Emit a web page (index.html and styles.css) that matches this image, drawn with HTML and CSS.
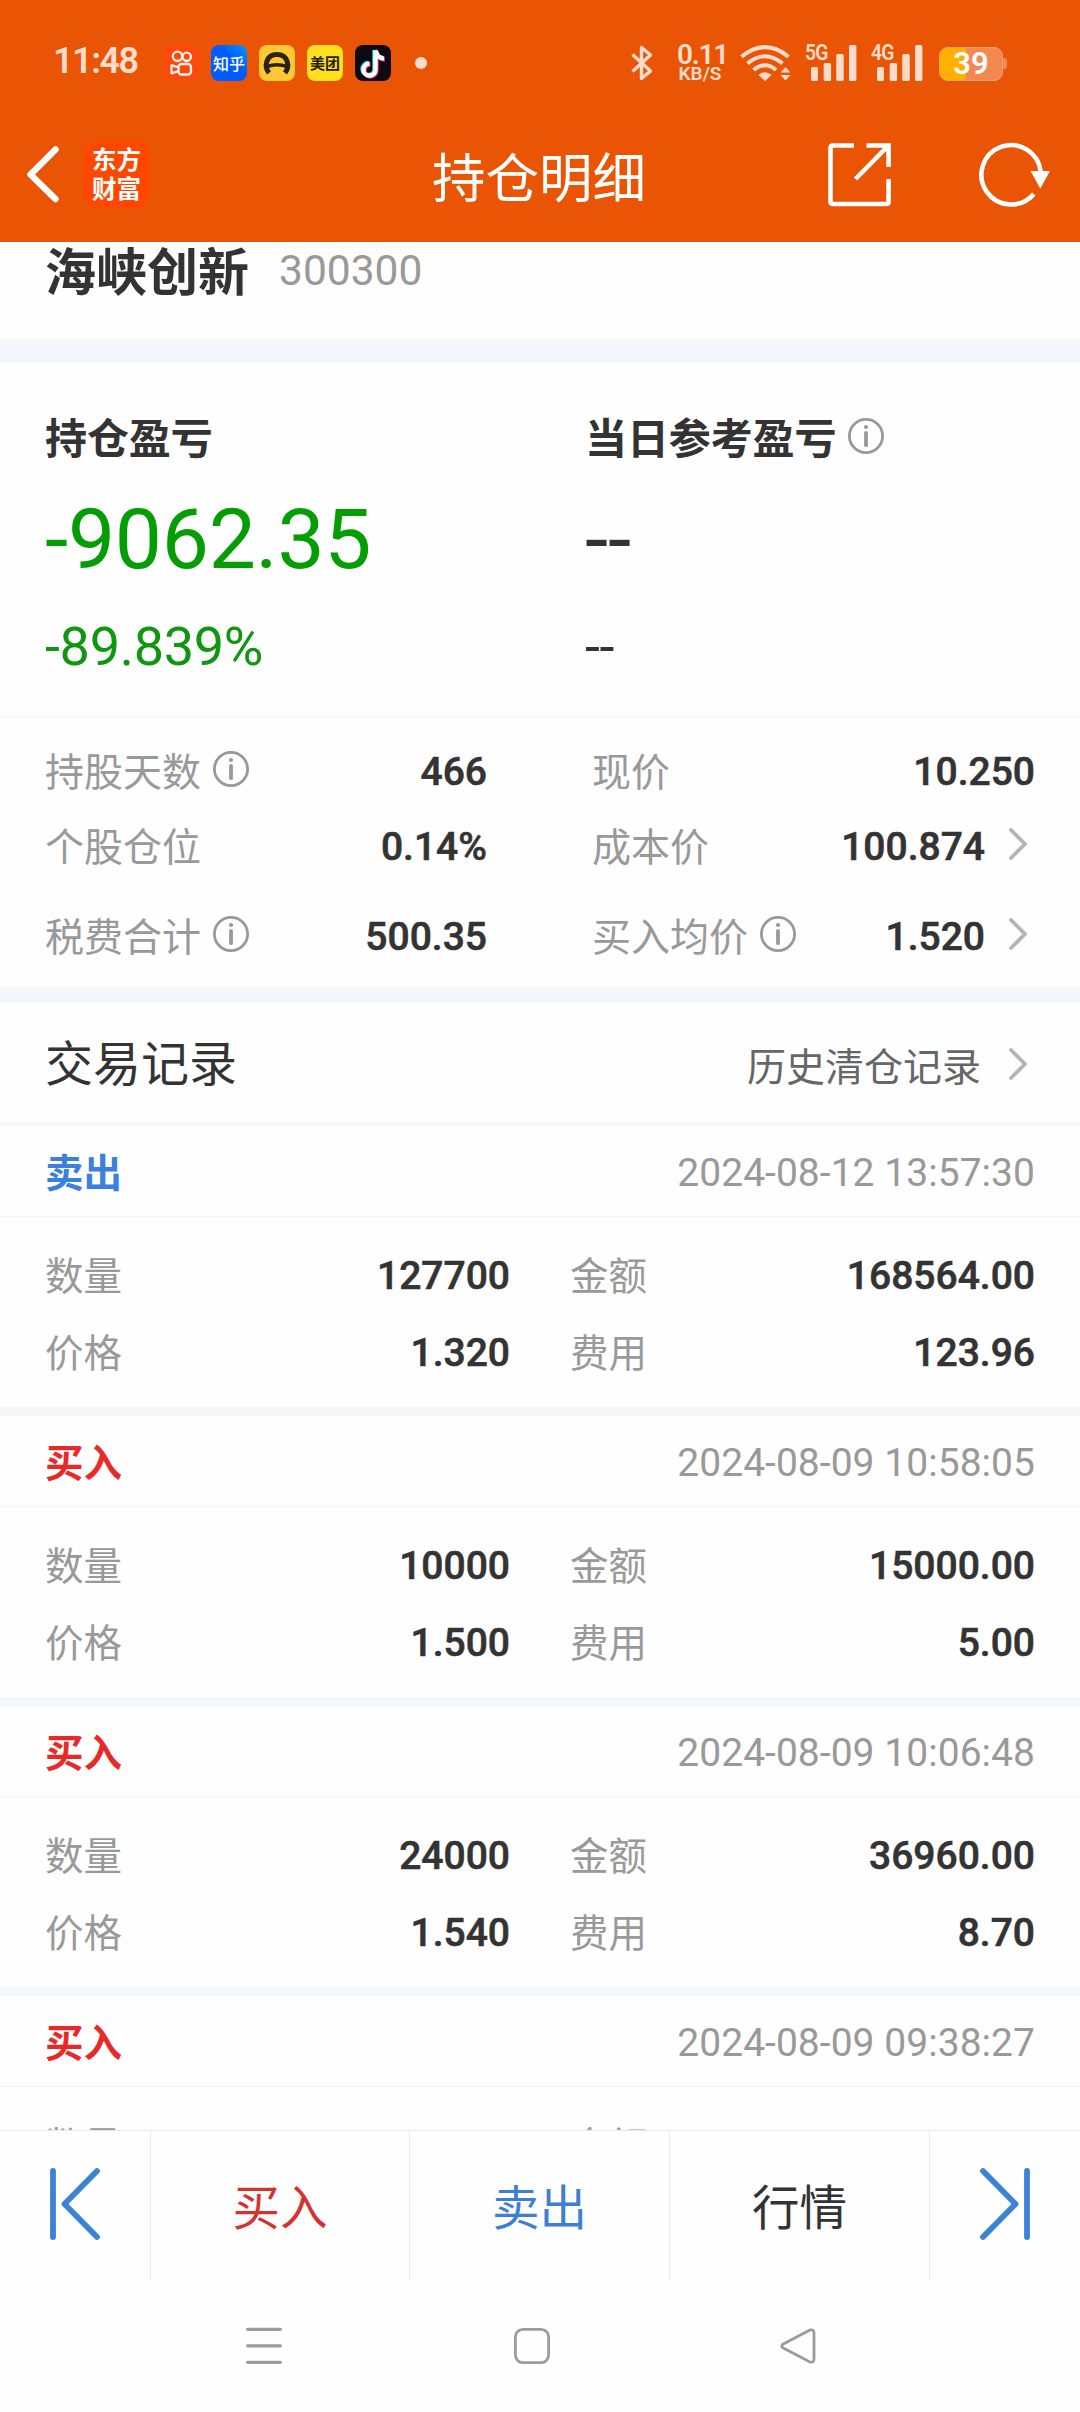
FILE: index.html
```html
<!DOCTYPE html>
<html lang="zh-CN">
<head>
<meta charset="utf-8">
<title>持仓明细</title>
<link rel="stylesheet" href="styles.css">
</head>
<body>
<svg class="defs" aria-hidden="true">
  <symbol id="info" viewBox="0 0 36 36"><circle cx="18" cy="18" r="16.6" fill="none" stroke="#999" stroke-width="2.8"/><circle cx="18" cy="9" r="2.1" fill="#999"/><path d="M18 15V27.2" stroke="#999" stroke-width="3.8" stroke-linecap="round"/></symbol>
  <symbol id="more" viewBox="0 0 18 32"><path d="M2 2L16 16L2 30" fill="none" stroke="#b4b4b4" stroke-width="3.8" stroke-linecap="round" stroke-linejoin="round"/></symbol>
  <symbol id="bars" viewBox="0 0 46 36"><path d="M0 23.5q0-1.5 1.5-1.5h4q1.5 0 1.5 1.5V34.500q0 1.500-1.500 1.500h-4q-1.500 0-1.500-1.500zM12.700 19.500q0-1.500 1.500-1.500h4.400q1.500 0 1.500 1.500V34.500q0 1.500-1.500 1.500h-4.400q-1.500 0-1.500-1.500zM25.300 10.500q0-1.500 1.500-1.500h4.400q1.500 0 1.500 1.500V34.500q0 1.500-1.500 1.500h-4.400q-1.500 0-1.500-1.500zM38 1.500q0-1.500 1.500-1.500h4.400q1.500 0 1.500 1.500V34.500q0 1.500-1.500 1.500h-4.400q-1.500 0-1.500-1.500z" fill="#ffdccb"/></symbol>
</svg>
<div class="screen">
  <header class="header">
    <div class="status">
      <span class="clock">11:48</span>
      <div class="apps">
        <span class="app kuaishou"><svg width="36" height="36" viewBox="0 0 36 36" fill="none" stroke="#fff3e8" stroke-width="2.300"><circle cx="14.500" cy="11.300" r="4.700"/><circle cx="23.700" cy="11.800" r="4.200"/><rect x="15.500" y="19" width="12.500" height="10.500" rx="3"/><path d="M15.500 22.500L8.500 20.200V28.300L15.500 26.200" stroke-linejoin="round"/></svg></span>
        <span class="app zhihu">知乎</span>
        <span class="app amap"><svg width="36" height="36" viewBox="0 0 36 36" fill="none" stroke="#29230f"><path d="M10 28C5 22 6.500 9.500 18 9.500S31 22 26 28" stroke-width="5"/><path d="M8 21.500Q18 18 28 21.500" stroke-width="3.500"/></svg></span>
        <span class="app meituan">美团</span>
        <span class="app douyin"><svg width="36" height="36" viewBox="0 0 36 36" fill="none" stroke-width="4.400"><path d="M19.500 5V24A6 6 0 1 1 13.500 18M19.500 5Q21 12.500 28 13" stroke="#29e6df"/><path d="M21.500 6.500V25.500A6 6 0 1 1 15.500 19.500M21.500 6.500Q23 14 30 14.500" stroke="#f52b55"/><path d="M20.500 5.500V24.700A6 6 0 1 1 14.500 18.700M20.500 5.500Q22 13 29 13.600" stroke="#fff"/></svg></span>
      </div>
      <span class="dot"></span>
      <div class="system">
        <svg class="bt" width="22" height="36" viewBox="0 0 22 36" fill="none" stroke="#ffdccb" stroke-width="3.400" stroke-linejoin="round"><path d="M1.500 9.500L19.500 26L10.500 33.500V2.500L19.500 10L1.500 26.500"/></svg>
        <div class="speed"><span class="rate">0.11</span><span class="unit">KB/S</span></div>
        <svg class="wifi" width="51" height="36" viewBox="0 0 51 36" fill="none" stroke="#ffdccb" stroke-width="4"><path d="M1.500 11.800Q25 -7.500 48.500 11.800"/><path d="M7.500 18.500Q25 4 42.500 18.500"/><path d="M13.500 25Q25 15.500 36 25"/><path d="M18.500 30Q25 24.500 31.500 30L25 36Z" fill="#ffdccb" stroke="none"/><path d="M40.500 27.500L45.500 22L50.500 27.500ZM40.500 30L45.500 35.500L50.500 30Z" fill="#ffdccb" stroke="none"/></svg>
        <div class="signal"><span class="net">5G</span><svg width="46" height="36"><use href="#bars"/></svg></div>
        <div class="signal"><span class="net">4G</span><svg width="46" height="36"><use href="#bars"/></svg></div>
        <div class="battery"><span class="level">39</span></div>
      </div>
    </div>
    <div class="navbar">
      <svg class="back" width="34" height="58" viewBox="0 0 34 58" fill="none" stroke="#fff" stroke-width="6.500" stroke-linecap="round" stroke-linejoin="round"><path d="M29.500 4.500L4.500 29.500L29.500 54"/></svg>
      <div class="brand"><span>东方</span><span>财富</span></div>
      <h1 class="page-title">持仓明细</h1>
      <svg class="share" width="64" height="64" viewBox="0 0 64 64" fill="none" stroke="#fff" stroke-width="4.600"><path d="M26 2.500H5Q2.500 2.500 2.500 5V58.500Q2.500 61 5 61H58Q60.600 61 60.600 58.500V36"/><path d="M38.500 2.500H60.600V24M59 4L27.500 36"/></svg>
      <svg class="refresh" width="74" height="66" viewBox="0 0 74 66"><path d="M54.800 53A29.700 29.700 0 1 1 61.700 31" fill="none" stroke="#fff" stroke-width="4.600"/><path d="M51.500 30H71L61.300 47.500Z" fill="#fff"/></svg>
    </div>
  </header>

  <main class="content">
    <section class="stock"><h2 class="stock-name">海峡创新</h2><span class="stock-code">300300</span></section>

    <section class="summary">
      <div class="profit">
        <h3 class="profit-title">持仓盈亏</h3>
        <p class="profit-value down">-9062.35</p>
        <p class="profit-rate down-rate">-89.839%</p>
      </div>
      <div class="profit">
        <h3 class="profit-title">当日参考盈亏<svg class="info" width="36" height="36"><use href="#info"/></svg></h3>
        <p class="profit-value">--</p>
        <p class="profit-rate">--</p>
      </div>
    </section>

    <section class="metrics">
      <div class="metric"><span class="label">持股天数</span><svg class="info" width="36" height="36"><use href="#info"/></svg><b class="value">466</b></div>
      <div class="metric"><span class="label">现价</span><b class="value">10.250</b></div>
      <div class="metric"><span class="label">个股仓位</span><b class="value">0.14%</b></div>
      <div class="metric"><span class="label">成本价</span><b class="value">100.874</b><svg class="more" width="18" height="32"><use href="#more"/></svg></div>
      <div class="metric last"><span class="label">税费合计</span><svg class="info" width="36" height="36"><use href="#info"/></svg><b class="value">500.35</b></div>
      <div class="metric last"><span class="label">买入均价</span><svg class="info" width="36" height="36"><use href="#info"/></svg><b class="value">1.520</b><svg class="more" width="18" height="32"><use href="#more"/></svg></div>
    </section>

    <section class="records-head">
      <h3 class="records-title">交易记录</h3>
      <a class="history">历史清仓记录</a>
      <svg class="more" width="18" height="32"><use href="#more"/></svg>
    </section>

    <article class="trade">
      <div class="trade-head"><b class="side sell">卖出</b><time>2024-08-12 13:57:30</time></div>
      <div class="trade-body">
        <div class="cell"><span class="label">数量</span><b class="value">127700</b></div><div class="cell"><span class="label">金额</span><b class="value">168564.00</b></div>
        <div class="cell"><span class="label">价格</span><b class="value">1.320</b></div><div class="cell"><span class="label">费用</span><b class="value">123.96</b></div>
      </div>
    </article>
    <article class="trade">
      <div class="trade-head"><b class="side buy">买入</b><time>2024-08-09 10:58:05</time></div>
      <div class="trade-body">
        <div class="cell"><span class="label">数量</span><b class="value">10000</b></div><div class="cell"><span class="label">金额</span><b class="value">15000.00</b></div>
        <div class="cell"><span class="label">价格</span><b class="value">1.500</b></div><div class="cell"><span class="label">费用</span><b class="value">5.00</b></div>
      </div>
    </article>
    <article class="trade">
      <div class="trade-head"><b class="side buy">买入</b><time>2024-08-09 10:06:48</time></div>
      <div class="trade-body">
        <div class="cell"><span class="label">数量</span><b class="value">24000</b></div><div class="cell"><span class="label">金额</span><b class="value">36960.00</b></div>
        <div class="cell"><span class="label">价格</span><b class="value">1.540</b></div><div class="cell"><span class="label">费用</span><b class="value">8.70</b></div>
      </div>
    </article>
    <article class="trade">
      <div class="trade-head"><b class="side buy">买入</b><time>2024-08-09 09:38:27</time></div>
      <div class="trade-body">
        <div class="cell"><span class="label">数量</span></div><div class="cell"><span class="label">金额</span></div>
      </div>
    </article>
  </main>

  <nav class="actions">
    <a class="action"><svg width="52" height="72" viewBox="0 0 52 72" fill="none" stroke="#3c82d8" stroke-width="5.800" stroke-linecap="round" stroke-linejoin="round"><path d="M4 3V69M48 3L15.500 36L48 69"/></svg></a>
    <a class="action red">买入</a>
    <a class="action blue">卖出</a>
    <a class="action">行情</a>
    <a class="action"><svg width="52" height="72" viewBox="0 0 52 72" fill="none" stroke="#3c82d8" stroke-width="5.800" stroke-linecap="round" stroke-linejoin="round"><path d="M48 3V69M4 3L36.500 36L4 69"/></svg></a>
  </nav>
  <nav class="system-nav">
    <svg width="36" height="38" viewBox="0 0 36 38" stroke="#9b9b9b" stroke-width="3.200" stroke-linecap="round"><path d="M1.600 2.300H34.400M1.600 18.800H34.400M1.600 35.300H34.400"/></svg>
    <svg width="36" height="38" viewBox="0 0 36 38" fill="none" stroke="#9b9b9b" stroke-width="2.800"><rect x="1.400" y="2.400" width="33.200" height="33.200" rx="7.500"/></svg>
    <svg width="36" height="38" viewBox="0 0 36 38" fill="none" stroke="#9b9b9b" stroke-width="2.800" stroke-linejoin="round"><path d="M.800 17.200L27.500 3.200Q32 2 32 6V32Q32 36.300 27.500 34.800L.800 20.800Q-1.200 19 .800 17.200Z"/></svg>
  </nav>
</div>
</body>
</html>
```
FILE: styles.css
```css
* { box-sizing: border-box; }
body, h1, h2, h3, p { margin: 0; font-weight: 400; }
body { background: #fefefe; color: #333; font-family: Roboto, "Noto Sans CJK SC", sans-serif; }
svg { display: block; flex: none; overflow: visible; }
.defs { position: absolute; width: 0; height: 0; }
.screen { display: flex; flex-direction: column; width: 1080px; height: 2412px; overflow: hidden; }

.header { flex: none; height: 242px; background: #e95504; color: #fff; }
.status { display: flex; align-items: center; height: 125px; padding-left: 53px; color: #ffdccb; white-space: nowrap; }
.clock { width: 110px; margin-top: -3px; font: 600 36px/40px Roboto, sans-serif; letter-spacing: -1.500px; }
.apps { display: flex; gap: 12px; }
.app { display: flex; align-items: center; justify-content: center; width: 36px; height: 36px; border-radius: 8px; overflow: hidden; font: 500 15px/36px "Noto Sans CJK SC", sans-serif; }
.kuaishou { background: #ff480b; }
.zhihu { background: linear-gradient(45deg, #005cff 60%, #0098ff); color: #fff; font-size: 16px; }
.amap { background: #ffc936; }
.meituan { background: #ffe01c; color: #221d0c; font-weight: 700; }
.douyin { background: #0d0915; }
.dot { width: 12px; height: 12px; margin-left: 24px; border-radius: 50%; background: #ffdccb; }
.system { display: flex; align-items: flex-start; height: 36px; margin-left: 204px; }
.speed { display: flex; flex-direction: column; width: 46px; margin-left: 24px; text-align: center; font-weight: 600; }
.rate { font-size: 28px; line-height: 19px; letter-spacing: -1.200px; }
.unit { font-size: 19px; line-height: 19px; }
.wifi { margin-left: 17px; }
.signal { position: relative; width: 46px; margin-left: 20px; }
.net { position: absolute; left: -6px; top: -2px; font-size: 22px; line-height: 20px; font-weight: 600; letter-spacing: -1px; transform-origin: 0 0; transform: scaleX(.88); }
.battery { position: relative; width: 64px; height: 34px; margin: 2px 0 0 16px; border: 1.500px solid #f5a47a; border-radius: 9px; background: linear-gradient(90deg, #ffb000 26px, #f28950 26px); color: #fff; text-align: center; }
.battery::after { content: ""; position: absolute; right: -5px; top: 10px; width: 4px; height: 11px; border-radius: 0 3px 3px 0; background: #f28950; }
.level { display: block; font-size: 31px; line-height: 31px; font-weight: 600; }

.navbar { display: flex; align-items: flex-start; padding: 16px 0 0 26px; }
.back { margin-top: 4px; }
.brand { display: flex; flex-direction: column; align-items: center; width: 67px; height: 67px; margin-left: 23px; padding-top: 3px; border-radius: 14px; background: #ff4700; font: 700 24.500px/29px "Noto Sans CJK SC", sans-serif; }
.page-title { width: 216px; margin-left: 282px; font-size: 53.500px; line-height: 77px; }
.share { margin: 2px 0 0 180px; }
.refresh { margin: 0 0 0 87px; }

.content { flex: 1; min-height: 0; overflow: hidden; }
.stock { display: flex; align-items: flex-start; height: 97px; padding: 0 45px; }
.stock-name { font-size: 51px; line-height: 64px; font-weight: 700; }
.stock-code { margin-left: 30px; color: #999; font-size: 42.500px; line-height: 58px; }
.summary { display: grid; grid-template-columns: 540px 1fr; height: 378px; padding: 52px 0 0 45px; border-top: 24px solid #f6f7fa; border-bottom: 1px solid #f4f4f4; }
.profit-title { display: flex; align-items: center; height: 50px; font-size: 42px; line-height: 50px; font-weight: 700; letter-spacing: -.1px; }
.profit-title .info { margin-top: -8px; }
.profit-value { margin-top: 33px; font-size: 84px; line-height: 84px; letter-spacing: -.3px; }
.profit-rate { margin-top: 38px; font-size: 54px; line-height: 54px; letter-spacing: -.3px; }
.down { color: #049e04; }
.down-rate { color: #109610; }
.info { margin: -5px 0 0 12px; }
.metrics { display: grid; grid-template-columns: 442px 443px; column-gap: 105px; height: 285px; padding: 17px 45px 0; align-content: start; border-bottom: 15px solid #f6f7fa; }
.metric { display: flex; align-items: center; height: 75px; }
.last { margin-top: 15px; }
.label { margin-top: 2px; color: #999; font-size: 39px; line-height: 48px; }
.value { margin-left: auto; font-size: 39px; line-height: 48px; font-weight: 500; -webkit-text-stroke: .6px #333; }
.more { margin: -5px 8px 0 24px; }
.records-head { display: flex; align-items: center; height: 124px; padding: 6px 45px 0; border-bottom: 4px solid #f6f7fa; }
.records-head .more { margin-top: -2px; }
.records-title { font-size: 48px; line-height: 60px; }
.history { margin: 5px 4px 0 auto; color: #666; font-size: 39px; line-height: 48px; }
.trade { border-bottom: 9px solid #f6f7fa; }
.trade-head { display: flex; align-items: center; justify-content: space-between; height: 91px; padding: 3px 45px 0; border-bottom: 1px solid #f3f4f6; font-size: 39px; line-height: 48px; }
.trade-head time { color: #999; letter-spacing: .04px; }
.side { margin-top: 2px; font-size: 38.500px; font-weight: 700; }
.sell { color: #3a80dc; }
.buy { color: #e72a28; }
.trade-body { display: grid; grid-template-columns: 465px 465px; column-gap: 60px; height: 190px; padding: 20px 45px 0; align-content: start; }
.cell { display: flex; align-items: center; height: 77px; }
.cell .label { font-size: 38.500px; }

.actions { display: grid; grid-template-columns: 151px 259px 260px 260px 1fr; flex: none; height: 150px; border-top: 1px solid #e9e9e9; }
.action { display: flex; align-items: center; justify-content: center; border-right: 1px solid #ebebeb; padding-top: 6px; font-size: 47.500px; line-height: 60px; }
.action:last-child { border-right: 0; }
.action svg { margin-top: -10px; }
.red { color: #d63230; }
.blue { color: #3c80d2; }
.system-nav { display: flex; flex: none; gap: 232px; height: 132px; padding: 47px 0 0 246px; }
```
